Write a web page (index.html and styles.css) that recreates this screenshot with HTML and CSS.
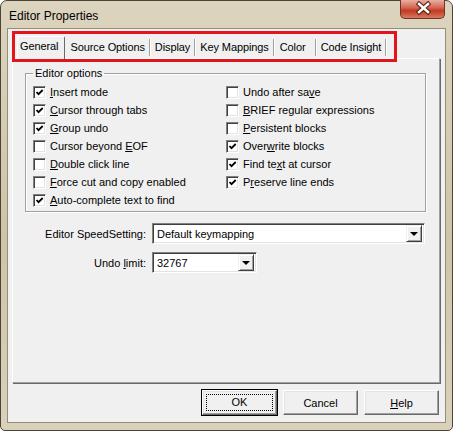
FILE: index.html
```html
<!DOCTYPE html>
<html lang="en">
<head>
    <meta charset="UTF-8">
    <title>Editor Properties</title>
    <link rel="stylesheet" href="styles.css">
</head>
<body>
    <div class="window">
        <div class="titlebar">
            <span class="title">Editor Properties</span>
            <div class="close">
                <svg width="45" height="19" viewBox="0 0 45 19">
                    <path d="M18 5 L27 13 M27 5 L18 13" stroke="#5a1f14" stroke-width="4.5" stroke-linecap="square"/>
                    <path d="M18 5 L27 13 M27 5 L18 13" stroke="#fff" stroke-width="2.5" stroke-linecap="square"/>
                </svg>
            </div>
        </div>
        <div class="client">
            <div class="tabs">
                <div class="tab active">General</div>
                <div class="tab">Source Options</div>
                <div class="tab">Display</div>
                <div class="tab">Key Mappings</div>
                <div class="tab wide">Color</div>
                <div class="tab">Code Insight</div>
            </div>
            <div class="panel">
                <fieldset class="group">
                    <legend>Editor options</legend>
                    <div class="options">
                        <div class="col">
                            <div class="opt"><span class="box checked"></span><span><u>I</u>nsert mode</span></div>
                            <div class="opt"><span class="box checked"></span><span><u>C</u>ursor through tabs</span></div>
                            <div class="opt"><span class="box checked"></span><span><u>G</u>roup undo</span></div>
                            <div class="opt"><span class="box"></span><span>Cursor beyond <u>E</u>OF</span></div>
                            <div class="opt"><span class="box"></span><span><u>D</u>ouble click line</span></div>
                            <div class="opt"><span class="box"></span><span><u>F</u>orce cut and copy enabled</span></div>
                            <div class="opt"><span class="box checked"></span><span><u>A</u>uto-complete text to find</span></div>
                        </div>
                        <div class="col">
                            <div class="opt"><span class="box"></span><span>Undo after sa<u>v</u>e</span></div>
                            <div class="opt"><span class="box"></span><span><u>B</u>RIEF regular expressions</span></div>
                            <div class="opt"><span class="box"></span><span><u>P</u>ersistent blocks</span></div>
                            <div class="opt"><span class="box checked"></span><span>Over<u>w</u>rite blocks</span></div>
                            <div class="opt"><span class="box checked"></span><span>Find te<u>x</u>t at cursor</span></div>
                            <div class="opt"><span class="box checked"></span><span>P<u>r</u>eserve line ends</span></div>
                        </div>
                    </div>
                </fieldset>
                <div class="setting first">
                    <label>Editor SpeedSetting:</label>
                    <div class="combo speed">
                        <span class="value">Default keymapping</span>
                        <span class="drop"></span>
                    </div>
                </div>
                <div class="setting">
                    <label>Undo <u>l</u>imit:</label>
                    <div class="combo undo">
                        <span class="value">32767</span>
                        <span class="drop"></span>
                    </div>
                </div>
            </div>
            <div class="buttons">
                <button class="btn default"><span>OK</span></button>
                <button class="btn"><span>Cancel</span></button>
                <button class="btn"><span><u>H</u>elp</span></button>
            </div>
        </div>
        <div class="mark"></div>
    </div>
</body>
</html>
```

FILE: styles.css
```css
body {
    margin: 0;
    font-family: "Liberation Sans", Arial, sans-serif;
    font-size: 11px;
    color: #000;
    background: #fff;
}
.window {
    position: relative;
    width: 453px;
    height: 431px;
    box-sizing: border-box;
    border: 1px solid #4a4536;
    border-radius: 7px 7px 5px 5px;
    background: linear-gradient(to bottom, #dcd4be, #cec4a9 55%, #d9d1ba);
    padding: 0 7px 8px 7px;
    display: flex;
    flex-direction: column;
}
.titlebar {
    height: 28px;
    display: flex;
    justify-content: space-between;
    align-items: flex-start;
}
.title {
    font-size: 12px;
    padding-top: 8px;
    padding-left: 1px;
    color: #000;
}
.close {
    width: 45px;
    height: 19px;
    margin-top: -1px;
    border: 1px solid #6b3528;
    border-top: none;
    border-radius: 0 0 5px 5px;
    box-sizing: border-box;
    background: linear-gradient(to bottom, #e7b0a4, #d66a55 40%, #c23a22 60%, #d77a60);
    overflow: hidden;
}
.close svg {
    display: block;
    margin-top: -1px;
}
.client {
    flex: 1;
    background: #f0f0f0;
    box-shadow: 0 0 0 1px #958d78;
    display: flex;
    flex-direction: column;
    padding: 5px 5px 7px 4px;
}
.tabs {
    height: 24px;
    display: flex;
    align-items: flex-start;
    padding-left: 5px;
    position: relative;
    z-index: 1;
}
.tab {
    height: 17px;
    margin-top: 5px;
    line-height: 17px;
    padding: 0 4px 0 5px;
    border-right: 1px solid #a0a0a0;
    box-shadow: 1px 0 0 #fff;
    white-space: nowrap;
    letter-spacing: -0.1px;
}
.tab.wide {
    width: 42px;
    padding: 0 0 0 6px;
    box-sizing: border-box;
}
.tab.active {
    height: 22px;
    margin-top: 2px;
    line-height: 18px;
    padding: 0 6px 0 2px;
    background: #f0f0f0;
    border-top: 1px solid #fff;
    border-left: 1px solid #fff;
    border-right: 1px solid #696969;
    border-radius: 2px 2px 0 0;
    box-shadow: none;
}
.panel {
    flex: 1;
    border: 1px solid;
    border-color: #fff #a0a0a0 #a0a0a0 #fff;
    box-shadow: 1px 1px 0 #696969;
    padding: 0 13px 0 12px;
}
.group {
    margin: 8px 0 0 0;
    padding: 3px 0 2px 7px;
    border: 1px solid #a0a0a0;
    box-shadow: inset 1px 1px 0 #fff, 1px 1px 0 #fff;
}
.group legend {
    padding: 0 2px;
    line-height: 13px;
}
.options {
    display: grid;
    grid-template-columns: 193px 1fr;
}
.opt {
    height: 18px;
    display: flex;
    align-items: center;
    gap: 4px;
    white-space: nowrap;
}
.box {
    width: 13px;
    height: 13px;
    box-sizing: border-box;
    border: 1px solid;
    border-color: #808080 #fff #fff #808080;
    box-shadow: inset 1px 1px 0 #404040, inset -1px -1px 0 #e3e3e3;
    background: #fff;
    flex: none;
}
.box.checked {
    background: #fff url("data:image/svg+xml;utf8,<svg xmlns='http://www.w3.org/2000/svg' width='11' height='11'><path d='M2.5 5 L4.5 7.2 L8.7 3' fill='none' stroke='black' stroke-width='1.8'/></svg>") center / 11px 11px no-repeat;
}
.setting {
    display: flex;
    align-items: center;
    gap: 6px;
    margin-top: 8px;
}
.setting.first {
    margin-top: 11px;
}
.setting label {
    width: 121px;
    text-align: right;
}
.combo {
    height: 21px;
    box-sizing: border-box;
    display: flex;
    align-items: center;
    background: #fff;
    border: 1px solid;
    border-color: #808080 #fff #fff #808080;
    box-shadow: inset 1px 1px 0 #404040, inset -1px -1px 0 #e3e3e3;
    padding: 2px;
}
.combo.speed {
    width: 273px;
}
.combo.undo {
    width: 105px;
}
.combo .value {
    flex: 1;
    padding-left: 2px;
}
.drop {
    width: 16px;
    height: 17px;
    box-sizing: border-box;
    background: #f0f0f0;
    border: 1px solid;
    border-color: #f0f0f0 #404040 #404040 #f0f0f0;
    box-shadow: inset 1px 1px 0 #fff, inset -1px -1px 0 #a0a0a0;
    position: relative;
}
.drop::after {
    content: "";
    position: absolute;
    left: 3px;
    top: 6px;
    border-left: 4px solid transparent;
    border-right: 4px solid transparent;
    border-top: 4px solid #000;
}
.buttons {
    display: flex;
    justify-content: flex-end;
    gap: 6px;
    margin-top: 7px;
    padding-right: 1px;
}
.btn {
    width: 75px;
    height: 25px;
    font-family: inherit;
    font-size: 11px;
    color: #000;
    background: #f0f0f0;
    border: 1px solid;
    border-color: #fff #696969 #696969 #fff;
    box-shadow: inset -1px -1px 0 #a0a0a0, inset 1px 1px 0 #e3e3e3;
    padding: 0;
}
.btn.default {
    outline: 1px solid #000;
    outline-offset: 0;
}
.btn.default span {
    display: block;
    margin: 0 3px;
    line-height: 15px;
    border: 1px dotted #000;
}
.mark {
    position: absolute;
    left: 11px;
    top: 30px;
    width: 385px;
    height: 31px;
    box-sizing: border-box;
    border: 3px solid #e3141c;
    z-index: 2;
}
```
